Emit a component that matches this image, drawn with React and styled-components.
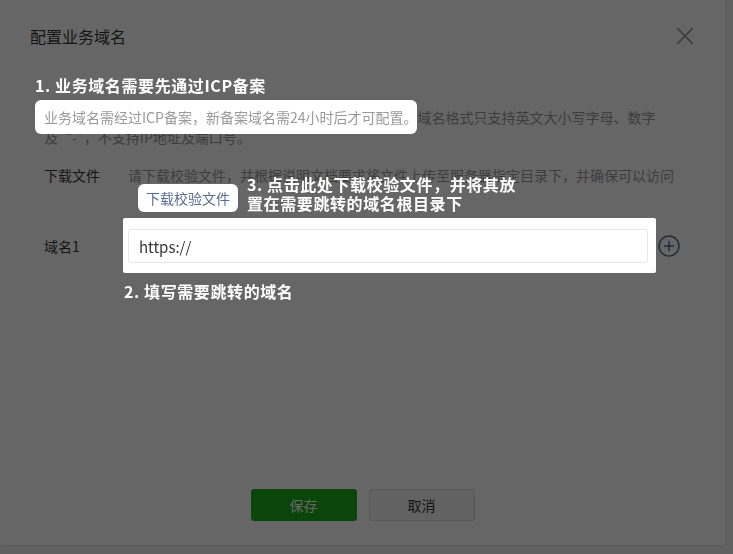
import styled, { createGlobalStyle } from "styled-components";

const GlobalStyle = createGlobalStyle`
  html, body {
    margin: 0;
    padding: 0;
    background: #f0f0f0;
    font-family: "Noto Sans CJK SC", "Noto Sans", sans-serif;
  }
`;

const Page = styled.div`
  width: 733px;
  height: 554px;
`;

const Dialog = styled.div`
  width: 725px;
  height: 545px;
  background: #fff;
  box-shadow: 1px 1px 0 #e4e4e4;
  display: flex;
  flex-direction: column;
`;

const Header = styled.div`
  height: 72px;
  display: flex;
  align-items: center;
  justify-content: space-between;
  padding: 0 31px 0 30px;
`;

const Title = styled.h3`
  margin: 0;
  font-size: 16px;
  font-weight: 400;
  color: #353535;
`;

const CloseButton = styled.button`
  border: 0;
  padding: 0;
  background: none;
  display: flex;
  cursor: pointer;
`;

const Body = styled.div`
  flex: 1;
  padding: 0 44px;
`;

const Notice = styled.p`
  margin: 35px 0 0;
  width: 620px;
  font-size: 14px;
  line-height: 20px;
  color: #999;
`;

const Overlay = styled.div`
  position: fixed;
  inset: 0;
  background: rgba(0, 0, 0, 0.6);
  z-index: 1;
`;

/* part of the page lifted above the overlay */
const Spot = styled.span`
  position: relative;
  z-index: 2;
  background: #fff;
  border-radius: 6px;
`;

const NoticeSpot = styled(Spot)`
  padding: 7px 0 7px 9px;
  margin-left: -9px;
`;

const Tip = styled.span`
  position: absolute;
  white-space: nowrap;
  color: #fff;
  font-size: 16px;
  font-weight: 700;
  line-height: 20px;
  letter-spacing: 0.6px;
  left: ${(p) => p.$left || "0"};
  top: ${(p) => p.$top || "auto"};
  bottom: ${(p) => p.$bottom || "auto"};
`;

const TipLine = styled.span`
  display: block;
  line-height: 19px;
`;

const Row = styled.div`
  display: flex;
  align-items: ${(p) => (p.$center ? "center" : "flex-start")};
  margin-top: ${(p) => p.$gap}px;
`;

const Label = styled.div`
  width: 84px;
  flex-shrink: 0;
  font-size: 14px;
  line-height: 20px;
  color: #353535;
`;

const Desc = styled.div`
  font-size: 14px;
  line-height: 20px;
  color: #999;
`;

const DownloadLink = styled(Spot)`
  display: inline-block;
  margin: -4px 0 0 10px;
  padding: 0 8px;
  height: 28px;
  line-height: 28px;
  font-size: 14px;
  color: #576b95;
  cursor: pointer;
`;

const InputSpot = styled(Spot)`
  display: block;
  margin-left: -5px;
  padding: 11px 8px 10px 5px;
  border-radius: 2px;
`;

const Input = styled.input`
  box-sizing: border-box;
  width: 520px;
  height: 34px;
  border: 1px solid #e7e7eb;
  border-radius: 3px;
  padding: 0 10px;
  font-family: "Noto Sans CJK SC", "Noto Sans", sans-serif;
  font-size: 15px;
  color: #353535;
  outline: none;
`;

const AddButton = styled.button`
  border: 0;
  padding: 0;
  margin-left: 2px;
  background: none;
  display: flex;
  cursor: pointer;
`;

const Footer = styled.div`
  display: flex;
  justify-content: center;
  gap: 12px;
  padding-bottom: 24px;
`;

const Button = styled.button`
  width: 106px;
  height: 32px;
  border-radius: 3px;
  font-family: "Noto Sans CJK SC", "Noto Sans", sans-serif;
  font-size: 14px;
  cursor: pointer;
  border: 1px solid ${(p) => (p.$primary ? "#1aad19" : "#d9d9d9")};
  background: ${(p) => (p.$primary ? "#1aad19" : "#f4f4f4")};
  color: ${(p) => (p.$primary ? "#fff" : "#353535")};
`;

export default function App() {
  return (
    <Page>
      <GlobalStyle />
      <Dialog>
        <Header>
          <Title>配置业务域名</Title>
          <CloseButton aria-label="关闭">
            <svg width="18" height="18" viewBox="0 0 18 18">
              <path d="M1 1L17 17M17 1L1 17" stroke="#888" strokeWidth="1.5" />
            </svg>
          </CloseButton>
        </Header>
        <Body>
          <Notice>
            <NoticeSpot>
              业务域名需经过ICP备案，新备案域名需24小时后才可配置。
              <Tip $bottom="calc(100% + 5px)">1. 业务域名需要先通过ICP备案</Tip>
            </NoticeSpot>
            域名格式只支持英文大小写字母、数字及“-”，不支持IP地址及端口号。
          </Notice>

          <Row $gap={18}>
            <Label>下载文件</Label>
            <div>
              <Desc>请下载校验文件，并根据说明文档要求将文件上传至服务器指定目录下，并确保可以访问</Desc>
              <DownloadLink>
                下载校验文件
                <Tip $left="calc(100% + 9px)" $top="-9px">
                  <TipLine>3. 点击此处下载校验文件，并将其放</TipLine>
                  <TipLine>置在需要跳转的域名根目录下</TipLine>
                </Tip>
              </DownloadLink>
            </div>
          </Row>

          <Row $gap={6} $center>
            <Label>域名1</Label>
            <InputSpot>
              <Input defaultValue="https://" />
              <Tip $left="1px" $top="calc(100% + 8px)">2. 填写需要跳转的域名</Tip>
            </InputSpot>
            <AddButton aria-label="添加">
              <svg width="22" height="22" viewBox="0 0 22 22">
                <circle cx="11" cy="11" r="10" fill="none" stroke="#576b95" strokeWidth="1.5" />
                <path d="M11 6V16M6 11H16" stroke="#576b95" strokeWidth="1.5" />
              </svg>
            </AddButton>
          </Row>
        </Body>
        <Footer>
          <Button $primary>保存</Button>
          <Button>取消</Button>
        </Footer>
      </Dialog>
      <Overlay />
    </Page>
  );
}
